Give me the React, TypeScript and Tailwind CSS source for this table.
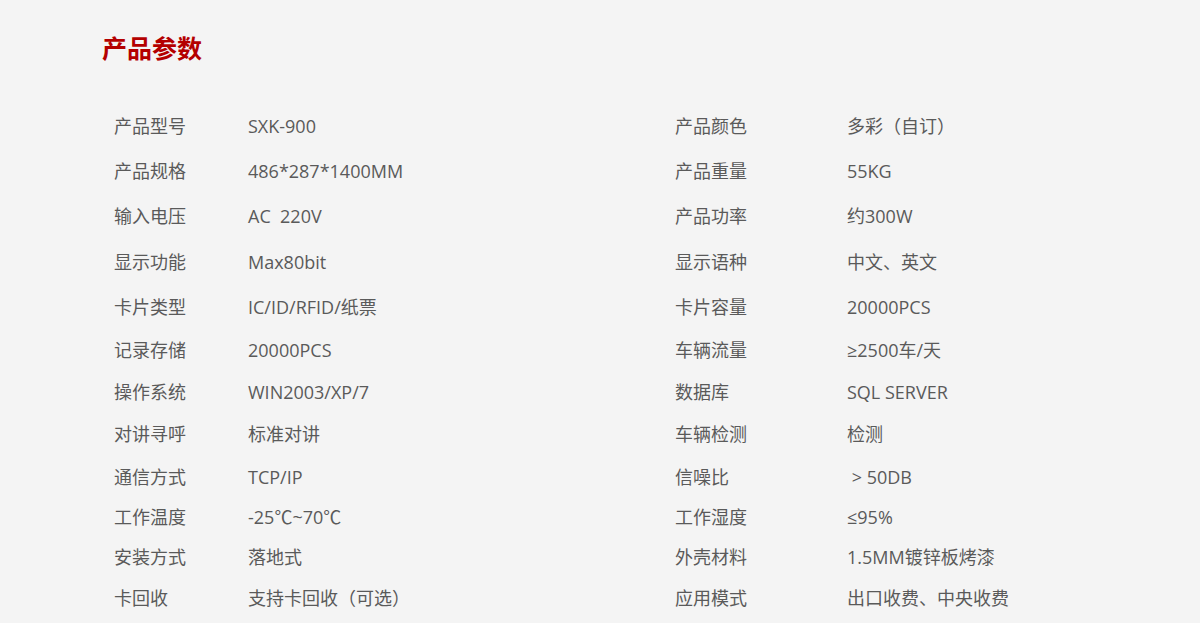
const rows: [string, string, string, string, string][] = [
  ["h-[46px]", "产品型号", "SXK-900", "产品颜色", "多彩（自订）"],
  ["h-[45px]", "产品规格", "486*287*1400MM", "产品重量", "55KG"],
  ["h-[45px]", "输入电压", "AC  220V", "产品功率", "约300W"],
  ["h-[46px]", "显示功能", "Max80bit", "显示语种", "中文、英文"],
  ["h-[44px]", "卡片类型", "IC/ID/RFID/纸票", "卡片容量", "20000PCS"],
  ["h-[42px]", "记录存储", "20000PCS", "车辆流量", "≥2500车/天"],
  ["h-[42px]", "操作系统", "WIN2003/XP/7", "数据库", "SQL SERVER"],
  ["h-[43px]", "对讲寻呼", "标准对讲", "车辆检测", "检测"],
  ["h-[42px]", "通信方式", "TCP/IP", "信噪比", " > 50DB"],
  ["h-[39px]", "工作温度", "-25℃~70℃", "工作湿度", "≤95%"],
  ["h-[40px]", "安装方式", "落地式", "外壳材料", "1.5MM镀锌板烤漆"],
  ["h-[42px]", "卡回收", "支持卡回收（可选）", "应用模式", "出口收费、中央收费"],
];

export default function App() {
  return (
    <div
      className="w-[1200px] h-[623px] overflow-hidden bg-[#f4f4f4] text-[#5a5a5a]"
      style={{ fontFamily: '"Open Sans", "Noto Sans CJK SC", sans-serif' }}
    >
      <div className="pl-[102px] pt-[30px]">
        <h2 className="text-[25px] leading-[34px] font-bold text-[#b40000]" style={{ fontFamily: '"Noto Sans CJK SC", sans-serif' }}>
          产品参数
        </h2>
      </div>
      <div className="pl-[114px] pt-[39px]">
        {rows.map(([h, a, b, c, d]) => (
          <div key={a} className={`${h} flex items-center text-[18px] whitespace-pre`}>
            <div className="w-[134px]">{a}</div>
            <div className="w-[427px]">{b}</div>
            <div className="w-[172px]">{c}</div>
            <div>{d}</div>
          </div>
        ))}
      </div>
    </div>
  );
}
